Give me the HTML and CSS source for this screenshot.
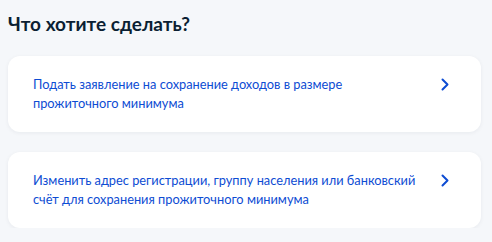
FILE: index.html
```html
<!DOCTYPE html>
<html lang="ru">
<head>
    <meta charset="UTF-8">
    <meta name="viewport" content="width=device-width, initial-scale=1.0">
    <title>Что хотите сделать?</title>
    <link rel="stylesheet" href="styles.css">
</head>
<body>
    <div class="page">
        <h2 class="title">Что хотите сделать?</h2>
        <div class="actions">
            <a class="action" href="#">
                <span class="action-text">Подать заявление на сохранение доходов в размере прожиточного минимума</span>
                <svg class="chevron" width="8" height="13" viewBox="0 0 8 13" fill="none">
                    <path d="M1.5 1.5 L6.5 6.5 L1.5 11.5" stroke="#0d4cd3" stroke-width="2" stroke-linecap="round" stroke-linejoin="round"/>
                </svg>
            </a>
            <a class="action" href="#">
                <span class="action-text">Изменить адрес регистрации, группу населения или банковский счёт для сохранения прожиточного минимума</span>
                <svg class="chevron" width="8" height="13" viewBox="0 0 8 13" fill="none">
                    <path d="M1.5 1.5 L6.5 6.5 L1.5 11.5" stroke="#0d4cd3" stroke-width="2" stroke-linecap="round" stroke-linejoin="round"/>
                </svg>
            </a>
        </div>
    </div>
</body>
</html>
```

FILE: styles.css
```css
body {
    background-color: #f5f7fa;
    font-family: Lato, "Noto Sans", sans-serif;
    color: #0b1f33;
    margin: 0;
    padding: 0;
}
.page {
    padding: 12px 11px 0 8px;
}
.title {
    font-size: 19px;
    font-weight: 700;
    line-height: 24px;
    margin: 0 0 20px;
}
.actions {
    display: flex;
    flex-direction: column;
    gap: 20px;
}
.action {
    display: flex;
    align-items: flex-start;
    justify-content: space-between;
    gap: 16px;
    background-color: #fff;
    border-radius: 12px;
    box-shadow: 0 1px 4px rgba(11, 31, 51, 0.06);
    padding: 19px 32px 19px 25px;
    text-decoration: none;
}
.action-text {
    color: #0d4cd3;
    font-size: 12.8px;
    line-height: 19px;
    max-width: 392px;
}
.chevron {
    flex-shrink: 0;
    margin-top: 3px;
}
```
